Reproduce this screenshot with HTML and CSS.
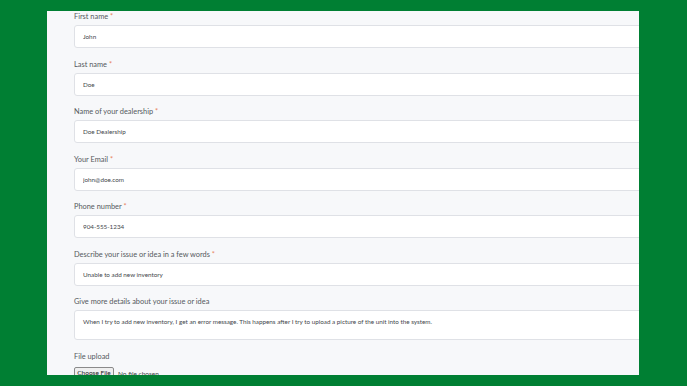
FILE: index.html
```html
<!DOCTYPE html>
<html lang="en">
<head>
    <meta charset="UTF-8">
    <meta name="viewport" content="width=device-width, initial-scale=1.0">
    <title>Support Request</title>
    <link rel="stylesheet" href="styles.css">
</head>
<body>

    <!-- Form Panel -->
    <div class="panel">
        <form class="form">
            <div class="field">
                <label>First name <span class="req">*</span></label>
                <input type="text" class="input" value="John">
            </div>
            <div class="field">
                <label>Last name <span class="req">*</span></label>
                <input type="text" class="input" value="Doe">
            </div>
            <div class="field">
                <label>Name of your dealership <span class="req">*</span></label>
                <input type="text" class="input" value="Doe Dealership">
            </div>
            <div class="field">
                <label>Your Email <span class="req">*</span></label>
                <input type="text" class="input" value="john@doe.com">
            </div>
            <div class="field">
                <label>Phone number <span class="req">*</span></label>
                <input type="text" class="input" value="904-555-1234">
            </div>
            <div class="field">
                <label>Describe your issue or idea in a few words <span class="req">*</span></label>
                <input type="text" class="input" value="Unable to add new inventory">
            </div>
            <div class="field">
                <label>Give more details about your issue or idea</label>
                <textarea class="input textarea">When I try to add new inventory, I get an error message. This happens after I try to upload a picture of the unit into the system.</textarea>
            </div>
            <div class="field file-field">
                <label>File upload</label>
                <div class="file-row">
                    <span class="file-btn">Choose File</span>
                    <span class="file-name">No file chosen</span>
                </div>
            </div>
        </form>
    </div>

</body>
</html>
```

FILE: styles.css
```css
/* Background */
body {
    margin: 0;
    background: #007f33;
    padding: 11px 48px 0 47px;
    height: 386px;
    box-sizing: border-box;
    font-family: 'Lato', 'Open Sans', sans-serif;
    overflow: hidden;
}

/* Panel */
.panel {
    background: #f7f8fa;
    height: 364px;
    overflow: hidden;
}

.form {
    padding-top: 1px;
    padding-left: 27px;
}

/* Fields */
.field {
    margin-bottom: 11.5px;
}

.field label {
    display: block;
    font-size: 7.4px;
    line-height: 10px;
    color: #55585d;
    margin-bottom: 3px;
}

.field .req {
    color: #e8845f;
}

.input {
    display: block;
    width: 600px;
    height: 23px;
    box-sizing: border-box;
    border: 1px solid #dfe1e6;
    border-radius: 3px;
    background: #fff;
    padding: 0 8px;
    font-family: 'Lato', 'Open Sans', sans-serif;
    font-size: 6.3px;
    color: #44474c;
    outline: none;
}

.textarea {
    height: 30px;
    padding-top: 7px;
    resize: none;
    overflow: hidden;
    margin-bottom: 12px;
}

/* File Upload */
.file-field label {
    margin-bottom: 5px;
}

.file-row {
    display: flex;
    align-items: center;
    gap: 4px;
    font-size: 6.5px;
    color: #3b3e44;
}

.file-btn {
    display: inline-block;
    width: 40px;
    box-sizing: border-box;
    padding: 1px 0;
    text-align: center;
    background: #efefef;
    border: 1px solid #8a8a8a;
    border-radius: 2px;
    line-height: 8px;
    color: #222;
}
```
